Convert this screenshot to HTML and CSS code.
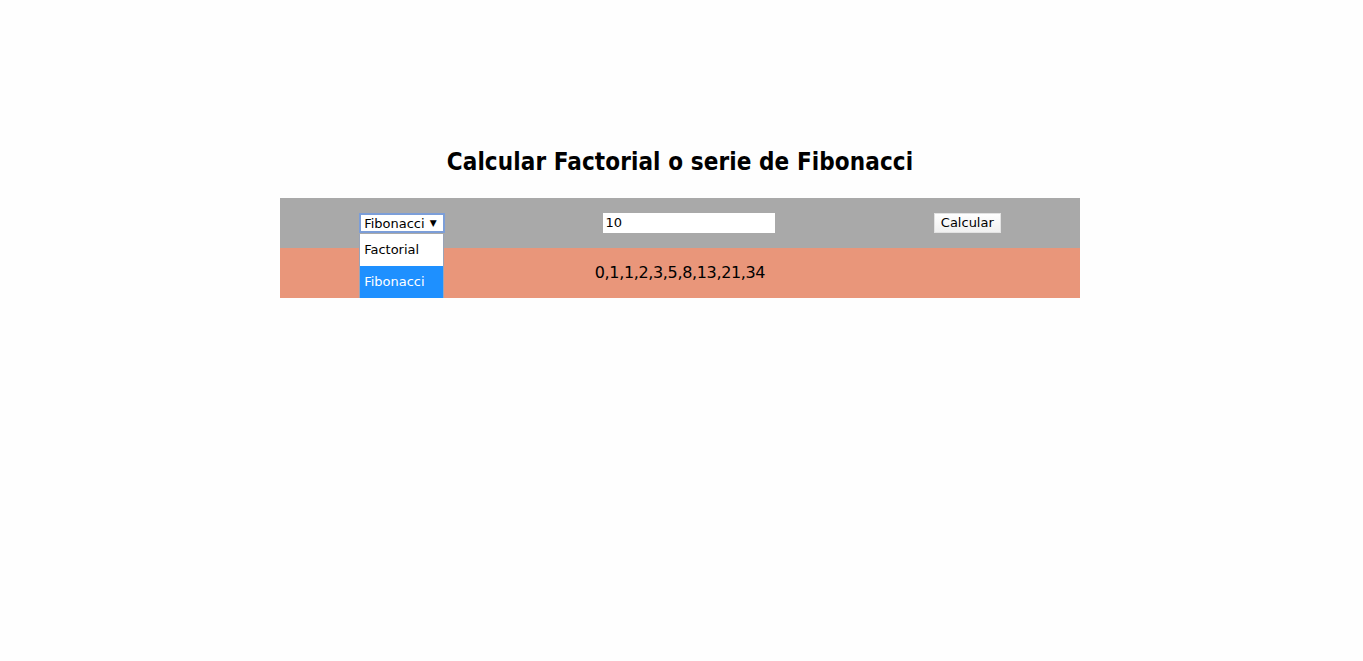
FILE: index.html
```html
<!DOCTYPE html>
<html lang="es">
<head>
<meta charset="utf-8">
<title>Calcular Factorial o serie de Fibonacci</title>
<link rel="stylesheet" href="styles.css">
</head>
<body>
<main class="page">
  <h1 class="title">Calcular Factorial o serie de Fibonacci</h1>
  <div class="panel">
    <div class="controls">
      <div class="select-wrap">
        <div class="select">Fibonacci <span class="arrow">▼</span></div>
        <ul class="options">
          <li class="option">Factorial</li>
          <li class="option selected">Fibonacci</li>
        </ul>
      </div>
      <div class="input">10</div>
      <div class="button">Calcular</div>
    </div>
    <div class="result">0,1,1,2,3,5,8,13,21,34</div>
  </div>
</main>
</body>
</html>
```

FILE: styles.css
```css
html, body {
  margin: 0;
  padding: 0;
  background: #fefefe;
}
body {
  font-family: "DejaVu Sans", Verdana, sans-serif;
  color: #000;
  padding-right: 3px;
}
.page {
  width: 800px;
  margin: 0 auto;
  padding-top: 148px;
}
.title {
  margin: 0 0 22px;
  text-align: center;
  font-family: "DejaVu Sans Condensed", "DejaVu Sans", sans-serif;
  font-size: 24px;
  font-weight: bold;
  letter-spacing: 0.1px;
  line-height: 28px;
  height: 28px;
}
.panel {
  width: 800px;
}
.controls {
  height: 50px;
  background: #a9a9a9;
  display: flex;
  justify-content: space-around;
  align-items: center;
  font-size: 13px;
}
.select-wrap {
  position: relative;
  margin-top: -1px;
}
.select {
  box-sizing: border-box;
  width: 86px;
  height: 20px;
  border: 2px solid #7c9ed8;
  background: #fff;
  padding-left: 3px;
  line-height: 17px;
  white-space: nowrap;
}
.arrow {
  font-size: 9px;
  margin-left: 1px;
  position: relative;
  top: -2px;
}
.options {
  position: absolute;
  left: 0;
  top: 21px;
  width: 85px;
  margin: 0;
  padding: 0;
  list-style: none;
  box-sizing: border-box;
  border: 1px solid #9aa4b8;
  border-top: none;
  background: #fff;
}
.option {
  height: 32px;
  line-height: 32px;
  padding-left: 4px;
}
.option.selected {
  background: #1e90ff;
  color: #fff;
}
.input {
  box-sizing: border-box;
  width: 172px;
  height: 20px;
  background: #fff;
  padding-left: 2px;
  line-height: 20px;
  margin-top: -1px;
}
.button {
  box-sizing: border-box;
  width: 67px;
  height: 20px;
  background: linear-gradient(#ffffff, #f0f0f0);
  border: 1px solid #e2e2e2;
  text-align: center;
  line-height: 18px;
  margin-top: -1px;
}
.result {
  height: 50px;
  background: #e9967a;
  text-align: center;
  font-size: 16px;
  letter-spacing: -0.35px;
  line-height: 50px;
}
```
